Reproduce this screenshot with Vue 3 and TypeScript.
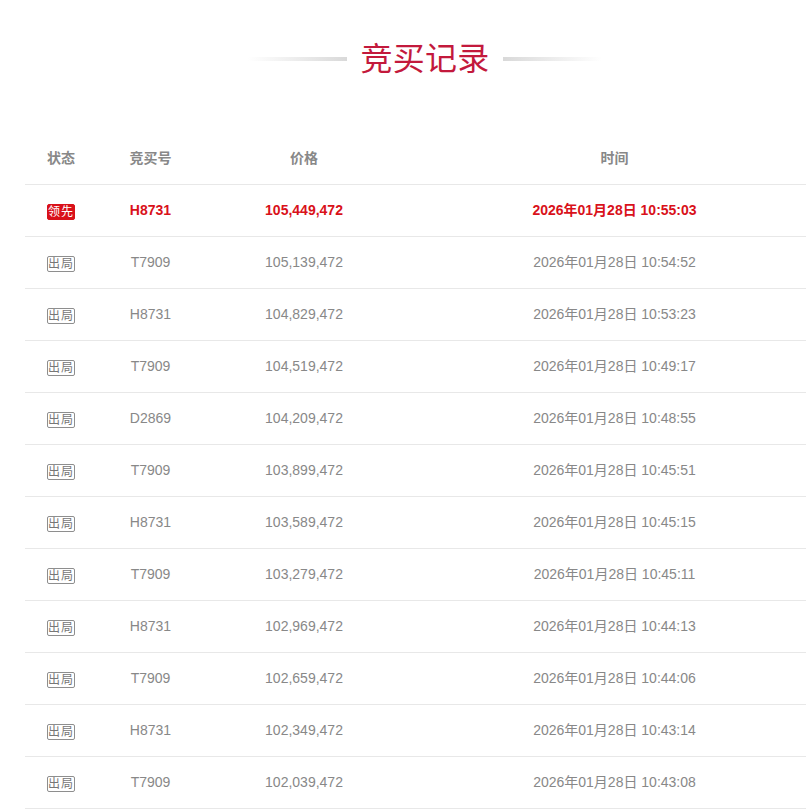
<script setup lang="ts">
interface Bid { code: string; price: string; time: string }
const bids: Bid[] = [
  { code: 'H8731', price: '105,449,472', time: '10:55:03' },
  { code: 'T7909', price: '105,139,472', time: '10:54:52' },
  { code: 'H8731', price: '104,829,472', time: '10:53:23' },
  { code: 'T7909', price: '104,519,472', time: '10:49:17' },
  { code: 'D2869', price: '104,209,472', time: '10:48:55' },
  { code: 'T7909', price: '103,899,472', time: '10:45:51' },
  { code: 'H8731', price: '103,589,472', time: '10:45:15' },
  { code: 'T7909', price: '103,279,472', time: '10:45:11' },
  { code: 'H8731', price: '102,969,472', time: '10:44:13' },
  { code: 'T7909', price: '102,659,472', time: '10:44:06' },
  { code: 'H8731', price: '102,349,472', time: '10:43:14' },
  { code: 'T7909', price: '102,039,472', time: '10:43:08' }
]
</script>

<template>
  <div class="page">
    <div class="inner">
      <div class="title">
        <span class="line left"></span>
        <h2>竞买记录</h2>
        <span class="line right"></span>
      </div>
      <div class="table">
        <div class="row head">
          <div>状态</div>
          <div>竞买号</div>
          <div>价格</div>
          <div>时间</div>
        </div>
        <div v-for="(b, i) in bids" :key="b.time" class="row" :class="{ lead: i === 0 }">
          <div class="state"><span class="badge">{{ i === 0 ? '领先' : '出局' }}</span></div>
          <div>{{ b.code }}</div>
          <div>{{ b.price }}</div>
          <div class="time">2026年01月28日 {{ b.time }}</div>
        </div>
      </div>
    </div>
  </div>
</template>

<style>
html, body { margin: 0; background: #fff; overflow: hidden; }
</style>

<style scoped>
.page {
  width: 806px;
  overflow: hidden;
  font-family: "Liberation Sans", "Noto Sans CJK SC", sans-serif;
  font-size: 14px;
  color: #888;
}
.inner {
  width: 800px;
  margin-left: 25px;
}
.title {
  display: flex;
  align-items: center;
  justify-content: center;
  gap: 13px;
  padding-top: 40px;
  height: 38px;
  margin-bottom: 55px;
}
.title h2 {
  margin: 0;
  font-size: 32px;
  line-height: 38px;
  font-weight: 400;
  color: #c3193c;
  letter-spacing: 0.3px;
}
.line { width: 99px; height: 4px; }
.line.left { background: linear-gradient(to right, #fff, #d9d9d9); }
.line.right { background: linear-gradient(to left, #fff, #d9d9d9); }
.row {
  display: grid;
  grid-template-columns: 72px 107px 200px 421px;
  height: 51px;
  align-items: center;
  text-align: center;
  border-bottom: 1px solid #e8e8e8;
}
.row > div { line-height: 20px; margin-bottom: 2px; }
.head { font-weight: 700; }
.lead { color: #d9111a; font-weight: 700; }
.row > .state { line-height: 16px; margin-bottom: 0; margin-top: 3px; }
.badge {
  display: block;
  box-sizing: border-box;
  width: 28px;
  height: 16px;
  margin: 0 auto;
  border: 1px solid #8e8e8e;
  border-radius: 2px;
  font-size: 12px;
  line-height: 14px;
  letter-spacing: 1px;
  font-weight: 400;
  color: #777;
  overflow: hidden;
  white-space: nowrap;
}
.lead .badge {
  background: #d9111a;
  border-color: #d9111a;
  color: #fff;
}
</style>
